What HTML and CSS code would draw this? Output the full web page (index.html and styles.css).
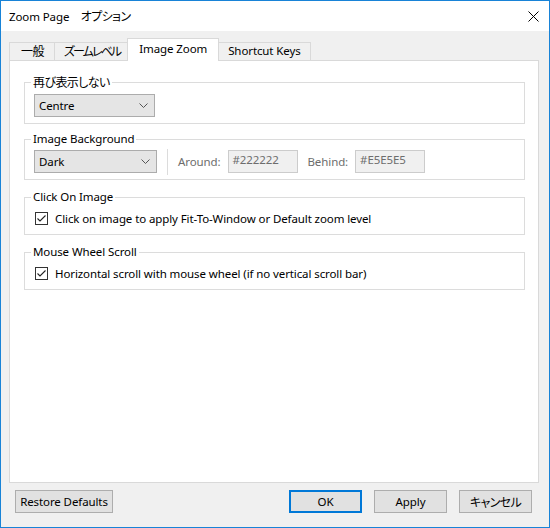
FILE: index.html
```html
<!DOCTYPE html>
<html>
<head>
<meta charset="utf-8">
<link rel="stylesheet" href="styles.css">
</head>
<body>
<div class="window">
  <div class="titlebar">
    <span class="title">Zoom Page<span class="jp">　オプション</span></span>
    <svg class="close" width="11" height="11" viewBox="0 0 11 11"><path d="M0.5 0.5 L10.5 10.5 M10.5 0.5 L0.5 10.5" stroke="#000" stroke-width="1" fill="none"/></svg>
  </div>
  <div class="client">
    <div class="tabs">
      <div class="tab first"><span class="jp">一般</span></div>
      <div class="tab"><span class="jp tight">ズームレベル</span></div>
      <div class="tab active">Image Zoom</div>
      <div class="tab">Shortcut Keys</div>
    </div>
    <div class="panel">
      <fieldset class="group g1">
        <legend><span class="jp">再び表示しない</span></legend>
        <div class="row">
          <div class="select w-centre"><span>Centre</span><svg class="chev" width="9" height="5" viewBox="0 0 9 5"><path d="M0.5 0.5 L4.5 4.5 L8.5 0.5" stroke="#555" fill="none"/></svg></div>
        </div>
      </fieldset>
      <fieldset class="group g2">
        <legend>Image Background</legend>
        <div class="row">
          <div class="select w-dark"><span>Dark</span><svg class="chev" width="9" height="5" viewBox="0 0 9 5"><path d="M0.5 0.5 L4.5 4.5 L8.5 0.5" stroke="#555" fill="none"/></svg></div>
          <div class="vsep"></div>
          <span class="dlabel">Around:</span>
          <div class="input">#222222</div>
          <span class="dlabel behind">Behind:</span>
          <div class="input">#E5E5E5</div>
        </div>
      </fieldset>
      <fieldset class="group g3">
        <legend>Click On Image</legend>
        <div class="check-row">
          <span class="box"><svg width="11" height="11" viewBox="0 0 11 11"><path d="M1.5 5.5 L4 8 L9.5 2.5" stroke="#222" stroke-width="1.1" fill="none"/></svg></span>
          <span>Click on image to apply Fit-To-Window or Default zoom level</span>
        </div>
      </fieldset>
      <fieldset class="group g4">
        <legend>Mouse Wheel Scroll</legend>
        <div class="check-row">
          <span class="box"><svg width="11" height="11" viewBox="0 0 11 11"><path d="M1.5 5.5 L4 8 L9.5 2.5" stroke="#222" stroke-width="1.1" fill="none"/></svg></span>
          <span>Horizontal scroll with mouse wheel (if no vertical scroll bar)</span>
        </div>
      </fieldset>
    </div>
    <div class="footer">
      <div class="btn restore">Restore Defaults</div>
      <div class="spacer"></div>
      <div class="btn ok">OK</div>
      <div class="btn">Apply</div>
      <div class="btn"><span class="jp">キャンセル</span></div>
    </div>
  </div>
</div>
</body>
</html>
```
FILE: styles.css
```css
* { box-sizing: border-box; }
html, body { margin: 0; padding: 0; background: #fff; }
body {
  font-family: "Noto Sans", "Noto Sans CJK JP", sans-serif;
  font-size: 11.5px;
  letter-spacing: -0.1px;
  color: #000;
}
.jp {
  font-family: "Noto Sans CJK JP", sans-serif;
  font-size: 12px;
  font-feature-settings: "palt";
  letter-spacing: -0.6px;
}
.jp.tight { letter-spacing: -1.9px; }
.window {
  width: 550px;
  height: 528px;
  border: 1px solid #1883D7;
  display: flex;
  flex-direction: column;
}
.titlebar {
  height: 30px;
  background: #fff;
  display: flex;
  align-items: center;
  padding-left: 8px;
  padding-right: 10px;
  flex: none;
}
.title { flex: 1; line-height: 16px; }
.close { display: block; }
.client {
  flex: 1;
  background: #F0F0F0;
  display: flex;
  flex-direction: column;
}
.tabs {
  display: flex;
  align-items: flex-end;
  padding-left: 8px;
  margin-top: 7px;
  height: 22px;
  flex: none;
}
.tab {
  height: 18px;
  line-height: 16px;
  padding: 0 9px;
  border: 1px solid #D9D9D9;
  border-bottom: none;
  background: #F0F0F0;
  margin-right: -1px;
  white-space: nowrap;
}
.tab.first { padding: 0 10px 0 11px; }
.tab.active {
  height: 23px;
  margin: 0 -1px -1px -2px;
  padding: 2px 11px 0;
  background: #fff;
  border-color: #D9D9D9;
  position: relative;
  z-index: 1;
}
.panel {
  flex: 1;
  margin: 0 10px 0 8px;
  background: #fff;
  border: 1px solid #D9D9D9;
  padding: 13px 13px 0 14px;
  display: flex;
  flex-direction: column;
}
.group {
  margin: 0;
  border: 1px solid #DCDCDC;
  padding: 3px 10px 6px 10px;
  min-width: 0;
}
.group + .group { margin-top: 7px; }
.group legend {
  padding: 0 2px;
  margin-left: -4px;
  line-height: 16px;
}
.g3, .g4 { padding-top: 4px; padding-bottom: 7px; }
.g3 { margin-top: 9px !important; }
.g4 { margin-top: 9px !important; }
.row {
  display: flex;
  align-items: center;
  height: 23px;
}
.select {
  height: 23px;
  background: #E5E5E5;
  border: 1px solid #ACACAC;
  display: flex;
  align-items: center;
  padding: 0 6px 0 4px;
  line-height: 16px;
}
.select span { flex: 1; }
.w-centre { width: 121px; margin-left: -1px; }
.w-dark { width: 123px; margin-left: -1px; }
.chev { display: block; }
.vsep {
  width: 1px;
  height: 26px;
  background: #DCDCDC;
  margin: 0 10px 0 10px;
}
.dlabel { color: #6D6D6D; margin-right: 7px; }
.behind { margin-left: 10px; }
.input {
  width: 70px;
  height: 23px;
  border: 1px solid #CCCCCC;
  background: #F0F0F0;
  color: #6D6D6D;
  padding: 1px 4px 0;
  line-height: 16px;
}
.check-row {
  display: flex;
  align-items: center;
  height: 18px;
}
.box {
  width: 13px;
  height: 13px;
  border: 1px solid #333;
  background: #fff;
  display: flex;
  align-items: center;
  justify-content: center;
  margin-right: 7px;
  flex: none;
}
.box svg { display: block; }
.footer {
  flex: none;
  height: 44px;
  display: flex;
  align-items: flex-start;
  padding: 7px 17px 0 14px;
}
.spacer { flex: 1; }
.btn {
  height: 23px;
  width: 73px;
  background: #E1E1E1;
  border: 1px solid #ADADAD;
  display: flex;
  align-items: center;
  justify-content: center;
  line-height: 16px;
  margin-left: 12px;
}
.btn.restore { width: 98px; margin-left: 0; }
.btn.ok { border: 2px solid #0078D7; margin-left: 0; }
```
